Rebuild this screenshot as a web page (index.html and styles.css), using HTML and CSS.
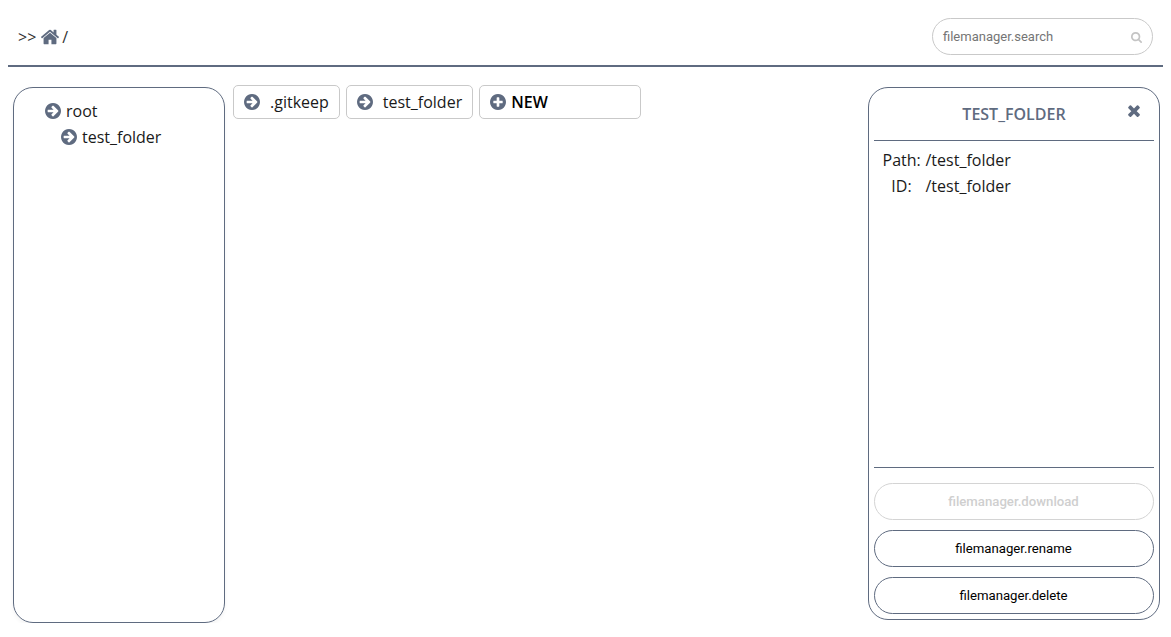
FILE: index.html
```html
<!DOCTYPE html>
<html lang="en">

<head>
    <meta charset="UTF-8" />
    <meta name="viewport" content="width=device-width, initial-scale=1.0" />
    <title>File manager</title>
    <link rel="stylesheet" href="styles.css">
</head>

<body>
    <svg class="defs" width="0" height="0" aria-hidden="true">
        <symbol id="i-arrow" viewBox="128 128 1536 1536">
            <path d="M1413 896q0-27-18-45l-91-91-362-362q-18-18-45-18t-45 18l-91 91q-18 18-18 45t18 45l189 189h-502q-26 0-45 19t-19 45v128q0 26 19 45t45 19h502l-189 189q-19 19-19 45t19 45l91 91q18 18 45 18t45-18l362-362 91-91q18-18 18-45zm251 0q0 209-103 385.500t-279.500 279.500-385.500 103-385.500-103-279.500-279.500-103-385.500 103-385.500 279.500-279.500 385.500-103 385.500 103 279.500 279.500 103 385.500z" />
        </symbol>
    </svg>

    <header class="topbar">
        <div class="crumbs">
            <span>&gt;&gt;</span>
            <svg class="icon-home" viewBox="0 0 1792 1792">
                <path d="M1472 992v480q0 26-19 45t-45 19h-384v-384h-256v384h-384q-26 0-45-19t-19-45v-480q0-1 .5-3t.5-3l575-474 575 474q1 2 1 6zm223-69l-62 74q-8 9-21 11h-3q-13 0-21-7l-692-577-692 577q-12 8-24 7-13-2-21-11l-62-74q-8-10-7-23.500t11-21.500l719-599q32-26 76-26t76 26l244 204v-195q0-14 9-23t23-9h192q14 0 23 9t9 23v408l219 182q10 8 11 21.500t-7 23.500z" />
            </svg>
            <span>/</span>
        </div>
        <div class="search">
            <span>filemanager.search</span>
            <svg class="icon-search" viewBox="64 128 1664 1664">
                <path d="M1216 832q0-185-131.500-316.500t-316.500-131.500-316.500 131.500-131.500 316.500 131.500 316.500 316.500 131.500 316.500-131.500 131.500-316.500zm512 832q0 52-38 90t-90 38q-54 0-90-38l-343-342q-179 124-399 124-143 0-273.500-55.500t-225-150-150-225-55.500-273.500 55.500-273.500 150-225 225-150 273.500-55.500 273.500 55.500 225 150 150 225 55.500 273.500q0 220-124 399l343 343q37 37 37 90z" />
            </svg>
        </div>
    </header>

    <main class="layout">
        <nav class="tree">
            <div class="node">
                <svg class="icon"><use href="#i-arrow" /></svg>
                <span>root</span>
            </div>
            <div class="node child">
                <svg class="icon"><use href="#i-arrow" /></svg>
                <span>test_folder</span>
            </div>
        </nav>

        <section class="files">
            <div class="file">
                <svg class="icon"><use href="#i-arrow" /></svg>
                <span>.gitkeep</span>
            </div>
            <div class="file">
                <svg class="icon"><use href="#i-arrow" /></svg>
                <span>test_folder</span>
            </div>
            <div class="file new">
                <svg class="icon" viewBox="128 128 1536 1536">
                    <path d="M1344 960v-128q0-26-19-45t-45-19h-256v-256q0-26-19-45t-45-19h-128q-26 0-45 19t-19 45v256h-256q-26 0-45 19t-19 45v128q0 26 19 45t45 19h256v256q0 26 19 45t45 19h128q26 0 45-19t19-45v-256h256q26 0 45-19t19-45zm320-64q0 209-103 385.500t-279.500 279.500-385.500 103-385.500-103-279.500-279.500-103-385.500 103-385.500 279.500-279.500 385.500-103 385.500 103 279.500 279.500 103 385.500z" />
                </svg>
                <span>NEW</span>
            </div>
        </section>

        <aside class="details">
            <div class="details-head">
                <h2>TEST_FOLDER</h2>
                <svg class="icon-close" viewBox="302 238 1188 1316">
                    <path d="M1490 1322q0 40-28 68l-136 136q-28 28-68 28t-68-28l-294-294-294 294q-28 28-68 28t-68-28l-136-136q-28-28-28-68t28-68l294-294-294-294q-28-28-28-68t28-68l136-136q28-28 68-28t68 28l294 294 294-294q28-28 68-28t68 28l136 136q28 28 28 68t-28 68l-294 294 294 294q28 28 28 68z" />
                </svg>
            </div>
            <dl class="info">
                <dt>Path:</dt>
                <dd>/test_folder</dd>
                <dt>ID:</dt>
                <dd>/test_folder</dd>
            </dl>
            <div class="actions">
                <button class="btn" disabled>filemanager.download</button>
                <button class="btn">filemanager.rename</button>
                <button class="btn">filemanager.delete</button>
            </div>
        </aside>
    </main>
</body>

</html>
```

FILE: styles.css
```css
:root {
    --slate: #5f6b80;
    --line: #c9c9c9;
    --text: #1a1a1a;
}

/* Base */
body {
    font-family: "Open Sans", sans-serif;
    font-size: 16px;
    color: var(--text);
    background: #ffffff;
    margin: 8px 8px 0;
}

.defs {
    display: block;
    height: 0;
}

/* Top bar */
.topbar {
    height: 57px;
    box-sizing: content-box;
    border-bottom: 2px solid var(--slate);
    display: flex;
    align-items: flex-start;
    justify-content: space-between;
}

.crumbs {
    display: flex;
    align-items: center;
    gap: 4px;
    margin: 17px 0 0 10px;
    height: 24px;
    font-size: 16px;
    color: #333333;
}

.icon-home {
    width: 20px;
    height: 20px;
    margin-right: -2px;
    fill: var(--slate);
}

.search {
    width: 221px;
    height: 37px;
    box-sizing: border-box;
    margin: 10px 10px 0 0;
    padding: 0 10px;
    border: 1px solid var(--line);
    border-radius: 19px;
    display: flex;
    align-items: center;
    justify-content: space-between;
    font-family: Roboto, sans-serif;
    font-size: 13px;
    color: #757575;
}

.icon-search {
    width: 11px;
    height: 11px;
    margin-top: 1px;
    fill: #c4c4c4;
}

/* Main area */
.layout {
    display: flex;
    align-items: flex-start;
    padding-left: 5px;
    padding-right: 3px;
}

.icon {
    width: 16px;
    height: 16px;
    flex: none;
    fill: var(--slate);
}

.tree {
    width: 212px;
    height: 536px;
    box-sizing: border-box;
    margin-top: 20px;
    padding: 10px 0 0 31px;
    border: 1px solid var(--slate);
    border-radius: 20px;
    box-shadow: 0 2px 4px rgba(0, 0, 0, 0.05);
}

.node {
    display: flex;
    align-items: center;
    gap: 5px;
    height: 26px;
}

.node.child {
    margin-left: 16px;
}

.files {
    flex: 1;
    display: flex;
    align-items: flex-start;
    gap: 6px;
    margin: 18px 0 0 8px;
}

.file {
    height: 34px;
    box-sizing: border-box;
    padding: 0 10px;
    border: 1px solid var(--line);
    border-radius: 5px;
    display: flex;
    align-items: center;
    gap: 10px;
}

.file.new {
    width: 162px;
    gap: 5px;
    font-weight: 600;
    color: #000000;
}

/* Details panel */
.details {
    width: 292px;
    height: 533px;
    box-sizing: border-box;
    margin-top: 20px;
    padding: 0 5px 5px;
    border: 1px solid var(--slate);
    border-radius: 20px;
    display: flex;
    flex-direction: column;
}

.details-head {
    position: relative;
    height: 52px;
    flex: none;
    border-bottom: 1px solid var(--slate);
    display: flex;
    align-items: center;
    justify-content: center;
}

.details-head h2 {
    margin: 0;
    font-size: 16px;
    font-weight: 600;
    color: var(--slate);
}

.icon-close {
    position: absolute;
    top: 16px;
    right: 14px;
    width: 12px;
    height: 13px;
    fill: var(--slate);
}

.info {
    flex: 1;
    margin: 0;
    padding: 6px 0 0 8.5px;
    display: grid;
    grid-template-columns: 38px 1fr;
    grid-auto-rows: 26px;
    column-gap: 5px;
    align-items: center;
}

.info dt {
    text-align: center;
}

.info dd {
    margin: 0;
}

.actions {
    flex: none;
    border-top: 1px solid var(--slate);
    padding-top: 15px;
    display: flex;
    flex-direction: column;
    gap: 10px;
}

.btn {
    height: 37px;
    padding: 0 1px 0 0;
    background: #ffffff;
    border: 1px solid var(--slate);
    border-radius: 19px;
    font-family: Roboto, sans-serif;
    font-size: 13.2px;
    color: #000000;
}

.btn:disabled {
    border-color: #d4d4d4;
    color: #cfcfcf;
    font-weight: 500;
}
```
